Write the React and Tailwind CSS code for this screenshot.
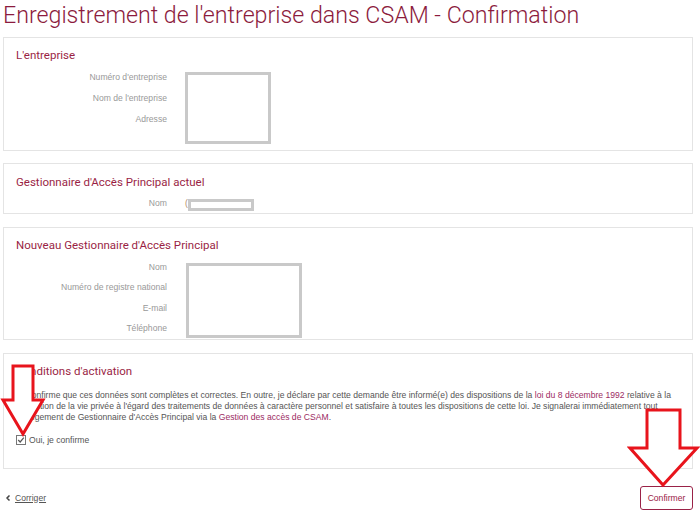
import { ChevronLeft } from "lucide-react";

const maroon = "text-[#9a1f45]";

function Label({ children }) {
  return (
    <div className="w-[151px] text-right text-[8.6px] text-[#999]">{children}</div>
  );
}

function Redacted({ className }) {
  return (
    <div
      className={`absolute border-[3px] border-[#c9c9c9] bg-white ${className}`}
    />
  );
}

function Arrow({ className, w, h, points }) {
  return (
    <svg
      className={`pointer-events-none absolute ${className}`}
      width={w}
      height={h}
      viewBox={`0 0 ${w} ${h}`}
    >
      <polygon
        points={points}
        fill="white"
        stroke="#e8141c"
        strokeWidth="3"
        strokeLinejoin="miter"
      />
    </svg>
  );
}

export default function App() {
  return (
    <div
      className="relative h-[516px] w-[700px] overflow-hidden bg-white"
      style={{ fontFamily: "'Liberation Sans', Arial, sans-serif" }}
    >
      <div className="ml-[3px] w-[690px]">
        <h1
          className="h-[37px] pt-[1px] text-[23.2px] font-light leading-[28px] text-[#8c1b3d]"
          style={{ fontFamily: "Roboto, sans-serif" }}
        >
          Enregistrement de l'entreprise dans CSAM - Confirmation
        </h1>

        {/* L'entreprise */}
        <section className="relative border border-[#e4e4e4] px-[12px] pt-[9px] pb-[20px]">
          <h2
            className={`mb-[4px] text-[11.5px] leading-[16px] ${maroon}`}
            style={{ fontFamily: "Roboto, sans-serif" }}
          >
            L'entreprise
          </h2>
          <div className="flex h-[21px] items-center">
            <Label>Numéro d'entreprise</Label>
          </div>
          <div className="flex h-[21px] items-center">
            <Label>Nom de l'entreprise</Label>
          </div>
          <div className="flex h-[21px] items-center">
            <Label>Adresse</Label>
          </div>
          <Redacted className="left-[181px] top-[34px] h-[72px] w-[86px]" />
        </section>

        {/* Gestionnaire actuel */}
        <section className="relative mt-[12px] border border-[#e4e4e4] px-[12px] pt-[10px]">
          <h2
            className={`mb-[3px] text-[11.5px] leading-[16px] ${maroon}`}
            style={{ fontFamily: "Roboto, sans-serif" }}
          >
            Gestionnaire d'Accès Principal actuel
          </h2>
          <div className="flex h-[20px] items-center">
            <Label>Nom</Label>
            <div className="ml-[18px] text-[8.6px] text-[#b08a6a]">(</div>
          </div>
          <Redacted className="left-[184px] top-[35px] h-[12px] w-[66px]" />
        </section>

        {/* Nouveau gestionnaire */}
        <section className="relative mt-[13px] border border-[#e4e4e4] px-[12px] pt-[9px]">
          <h2
            className={`mb-[4px] text-[11.5px] leading-[16px] ${maroon}`}
            style={{ fontFamily: "Roboto, sans-serif" }}
          >
            Nouveau Gestionnaire d'Accès Principal
          </h2>
          <div className="flex h-[20.5px] items-center">
            <Label>Nom</Label>
          </div>
          <div className="flex h-[20.5px] items-center">
            <Label>Numéro de registre national</Label>
          </div>
          <div className="flex h-[20.5px] items-center">
            <Label>E-mail</Label>
          </div>
          <div className="flex h-[20.5px] items-center">
            <Label>Téléphone</Label>
          </div>
          <Redacted className="left-[182px] top-[35px] h-[75px] w-[116px]" />
        </section>

        {/* Conditions */}
        <section className="relative mt-[13px] border border-[#e4e4e4] px-[12px] pt-[9px] pb-[21px]">
          <h2
            className={`mb-[11px] text-[11.5px] leading-[16px] ${maroon}`}
            style={{ fontFamily: "Roboto, sans-serif" }}
          >
            Conditions d'activation
          </h2>
          <p className="text-[8.6px] leading-[11px] text-[#555]">
            Je confirme que ces données sont complètes et correctes. En outre, je
            déclare par cette demande être informé(e) des dispositions de la{" "}
            <a className="text-[#9c2c63]">loi du 8 décembre 1992</a> relative à la
            protection de la vie privée à l'égard des traitements de données à
            caractère personnel et satisfaire à toutes les dispositions de cette
            loi. Je signalerai immédiatement tout changement de Gestionnaire
            d'Accès Principal via la{" "}
            <a className="text-[#9c2c63]">Gestion des accès de CSAM</a>.
          </p>
          <label className="mt-[10px] flex h-[14px] items-center gap-[3px] text-[8.6px] text-[#555]">
            <svg width="10" height="10" viewBox="0 0 10 10">
              <rect x="0.5" y="0.5" width="9" height="9" fill="white" stroke="#777" />
              <path d="M2.2 5 L4.2 7 L7.8 2.6" fill="none" stroke="#555" strokeWidth="1.2" />
            </svg>
            Oui, je confirme
          </label>
        </section>

        <div className="mt-[17px] flex items-center justify-between">
          <a className="flex items-center gap-[3px] pl-[1px] text-[8.6px] text-[#555] underline">
            <ChevronLeft size={8} strokeWidth={5} className="text-[#444]" />
            Corriger
          </a>
          <button className="flex h-[24px] w-[53px] items-center justify-center rounded-[3px] border-[1.5px] border-[#9a2247] text-[8.6px] text-[#9a2247]">
            Confirmer
          </button>
        </div>
      </div>

      <Arrow
        className="left-0 top-[363px]"
        w={46}
        h={75}
        points="13,3 33,3 33,37 43,37 23,71 3,37 13,37"
      />
      <Arrow
        className="left-[627px] top-[407px]"
        w={73}
        h={81}
        points="20,3 53,3 53,41 70,41 36,78 3,41 20,41"
      />
    </div>
  );
}
